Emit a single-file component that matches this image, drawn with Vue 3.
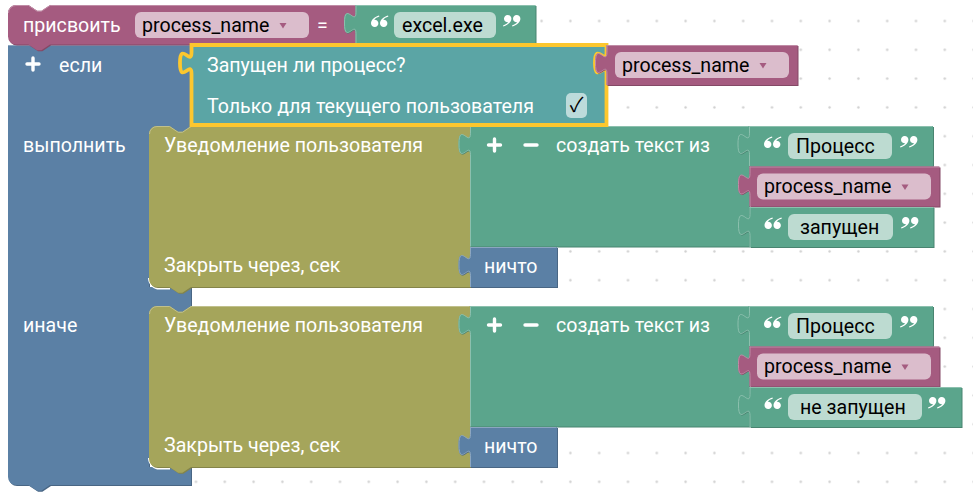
<script setup>
const S = 1.44
const n = (v) => +(v * S).toFixed(2)
const tabUp = `c 0,${n(-10)} ${n(-8)},${n(8)} ${n(-8)},${n(-7.5)} s ${n(8)},${n(2.5)} ${n(8)},${n(-7.5)}`
const tabDown = `c 0,${n(10)} ${n(-8)},${n(-8)} ${n(-8)},${n(7.5)} s ${n(8)},${n(-2.5)} ${n(8)},${n(7.5)}`
const notchR = 'l 8.64,5.76 4.32,0 8.64,-5.76'
const notchL = 'l -8.64,5.76 -4.32,0 -8.64,-5.76'
const R = 8
const QUOTE = 'M8,0.6 C4,1.6 0,4.8 0,8.3 A3.7,3.7 0 1 0 3.2,4.7 C4.4,3.4 6,2.4 8.4,1.6 Z'

function shape({ x, y, w, h, top, bottom, tab, socket }) {
  let d = top ? `M ${x},${y + R} A ${R} ${R} 0 0 1 ${x + R},${y} H ${x + 20.5} ${notchR} H ${x + w}` : `M ${x},${y} H ${x + w}`
  if (socket) d += ` V ${y + 7.2} ${tabDown}`
  d += ` V ${y + h}`
  if (bottom) d += ` H ${x + 42} ${notchL} H ${x + R} A ${R} ${R} 0 0 1 ${x},${y + h - R}`
  else d += ` H ${x}`
  if (tab) d += ` V ${y + 28.8} ${tabUp}`
  d += ' Z'
  let light = top ? `M ${x + 0.5},${y + R} A ${R - 0.5} ${R - 0.5} 0 0 1 ${x + R},${y + 0.5} H ${x + 20.5} ${notchR} H ${x + w - 0.5}` : `M ${x},${y + 0.5} H ${x + w - 0.5}`
  if (tab) light += ` M ${x + 0.5},${y + h} V ${y + 28.8} ${tabUp} V ${y}`
  return { d, light }
}

function nameBlock(x, y, w, fieldX) {
  return {
    color: 'crimson', ...shape({ x, y, w, h: 40, tab: true }),
    fields: [{ x: fieldX, y: y + 7, w: 174, text: 'process_name', tx: fieldX + 7, base: Math.floor(y + 27), caret: fieldX + 144.5 }]
  }
}

function textBlock(x, y, w, fieldW, text, textX, closeX) {
  return {
    color: 'green', ...shape({ x, y, w, h: 40, tab: true }),
    fields: [{ x: Math.floor(x) + 39, y: y + 7, w: fieldW, text, tx: textX, base: y + 27, tint: 'f-green' }],
    quotes: [
      { x: x + 15, y: y + 10 }, { x: x + 24, y: y + 10 },
      { x: closeX, y: y + 10, close: true }, { x: closeX + 9, y: y + 10, close: true }
    ]
  }
}

function statement(y, cy, closeRow) {
  const base = y + 26
  return [
    {
      color: 'olive', ...shape({ x: 149, y, w: 321, h: 161, top: true, bottom: true }),
      labels: [
        { x: 164, y: base, text: 'Уведомление пользователя' },
        { x: 164, y: y + 146, text: 'Закрыть через, сек' }
      ]
    },
    {
      color: 'green', ...shape({ x: 470, y, w: 279, h: 120.5, tab: true }),
      labels: [{ x: 556, y: base, text: 'создать текст из' }],
      plus: [{ x: 494.5, y: cy }], minus: [{ x: 531, y: cy }]
    },
    { color: 'blue', ...shape({ x: 470, y: y + 121, w: 87, h: 40, tab: true }), labels: [{ x: 484, y: y + 147, text: 'ничто' }] },
    textBlock(749, y, 184, 104, 'Процесс', 796, 900),
    nameBlock(749.5, y + 40.5, 190, 757),
    closeRow
  ]
}

const blueD = 'M 8,45 H 191 V 133 H 149 V 287 H 191 V 313 H 149 V 467 H 191 V 485 H 50 ' + notchL + ' H 16 A 8 8 0 0 1 8,477 Z'

const blocks = [
  {
    color: 'blue', d: blueD, light: 'M 8,45.5 H 190.5',
    labels: [
      { x: 59, y: 72, text: 'если' },
      { x: 23, y: 152, text: 'выполнить' },
      { x: 23, y: 332, text: 'иначе' }
    ],
    plus: [{ x: 33, y: 64 }]
  },
  {
    color: 'crimson', ...shape({ x: 8, y: 5, w: 348, h: 39.5, top: true, bottom: true }),
    labels: [{ x: 317, y: 32, text: '=' }, { x: 23, y: 32, text: 'присвоить' }],
    fields: [{ x: 135, y: 12, w: 174, text: 'process_name', tx: 142, base: 32, caret: 279.5 }]
  },
  {
    color: 'green', ...shape({ x: 355.5, y: 5, w: 180, h: 39.5, tab: true }),
    fields: [{ x: 394, y: 12, w: 102, text: 'excel.exe', tx: 402, base: 32, tint: 'f-green' }],
    quotes: [
      { x: 371, y: 15 }, { x: 380, y: 15 },
      { x: 503, y: 15, close: true }, { x: 512, y: 15, close: true }
    ]
  },
  { color: 'gap', corners: ['M 149,278 A 10.5 10.5 0 0 0 159.5,288.5 H 170', 'M 149,458 A 10.5 10.5 0 0 0 159.5,468.5 H 170'] },
  ...statement(126, 145, textBlock(749.5, 207, 184, 105, 'запущен', 800, 901)),
  ...statement(306, 325, textBlock(749.5, 387, 212, 134, 'не запущен', 800, 928)),
  {
    color: 'teal', selected: true, ...shape({ x: 191.5, y: 45, w: 415, h: 80, tab: true, socket: true }),
    labels: [
      { x: 207, y: 72, text: 'Запущен ли процесс?' },
      { x: 207, y: 113, text: 'Только для текущего пользователя' }
    ],
    check: { x: 566, y: 93 }
  },
  nameBlock(606.5, 45, 191, 615)
]
</script>

<template>
  <svg class="canvas" width="973" height="499" viewBox="0 0 973 499">
    <defs>
      <pattern id="dots" x="181.6" y="6.6" width="28.8" height="28.8" patternUnits="userSpaceOnUse">
        <circle cx="14.4" cy="14.4" r="1.2" class="dot" />
      </pattern>
    </defs>
    <rect width="973" height="499" fill="url(#dots)" />
    <g v-for="(b, i) in blocks" :key="i" :class="['block', b.color]">
      <path v-if="b.d && !b.selected" class="dark" :d="b.d" transform="translate(1,1)" />
      <path v-if="b.d" :class="['body', { selected: b.selected }]" :d="b.d" />
      <path v-if="b.light && !b.selected" class="light" :d="b.light" />
      <path v-for="c in b.corners || []" :key="c" class="corner" :d="c" />
      <text v-for="l in b.labels || []" :key="l.text" class="label" :x="l.x" :y="l.y">{{ l.text }}</text>
      <g v-for="f in b.fields || []" :key="f.tx">
        <rect :class="['field', f.tint]" :x="f.x" :y="f.y" :width="f.w" height="26" rx="6" />
        <text class="value" :x="f.tx" :y="f.base">{{ f.text }}</text>
        <path v-if="f.caret" class="caret" :d="`M ${f.caret},${f.y + 11} h 7 l -3.5,5.5 Z`" />
      </g>
      <path
        v-for="q in b.quotes || []"
        :key="q.x"
        class="mark"
        :d="QUOTE"
        :transform="q.close ? `translate(${q.x + 8.4},${q.y + 12}) rotate(180)` : `translate(${q.x},${q.y})`"
      />
      <path v-for="p in b.plus || []" :key="p.x" class="sign" :d="`M ${p.x - 6},${p.y} H ${p.x + 6} M ${p.x},${p.y - 6} V ${p.y + 6}`" />
      <path v-for="m in b.minus || []" :key="m.x" class="sign" :d="`M ${m.x - 6},${m.y} H ${m.x + 6}`" />
      <g v-if="b.check">
        <rect class="field f-teal" :x="b.check.x" :y="b.check.y" width="21" height="25" rx="5" />
        <text class="tick" :x="b.check.x + 10.5" :y="b.check.y + 19">✓</text>
      </g>
    </g>
  </svg>
</template>

<style scoped>
.canvas {
  display: block;
  background: #fff;
}
.dot {
  fill: #cfcfcf;
}
.label,
.value {
  font-family: Roboto, "Liberation Sans", sans-serif;
  font-size: 19.6px;
}
.label {
  fill: #fff;
}
.value {
  fill: #000;
}
.tick {
  font-family: "Noto Sans CJK SC", "DejaVu Sans", sans-serif;
  font-size: 20px;
  fill: #000;
  text-anchor: middle;
}
.light {
  fill: none;
  stroke-width: 1;
}
.corner {
  fill: none;
  stroke: #fff;
  stroke-width: 2;
}
.mark {
  fill: #fff;
}
.sign {
  fill: none;
  stroke: #fff;
  stroke-width: 3.4;
  stroke-linecap: round;
}
.crimson .body { fill: #a55b80; }
.crimson .dark { fill: #844966; }
.crimson .light { stroke: #c08ca6; }
.crimson .field { fill: #dbbdcc; }
.crimson .caret { fill: #a55b80; }
.green .body { fill: #5ba58c; }
.green .dark { fill: #498470; }
.green .light { stroke: #8cc0ae; }
.blue .body { fill: #5b80a5; }
.blue .dark { fill: #496684; }
.blue .light { stroke: #8ca6c0; }
.olive .body { fill: #a5a55b; }
.olive .dark { fill: #848449; }
.olive .light { stroke: #c0c08c; }
.teal .body { fill: #5ba5a5; }
.selected {
  stroke: #fcc72e;
  stroke-width: 3.8;
}
.f-green { fill: #bddbd1; }
.f-teal { fill: #bddbdb; }
</style>
